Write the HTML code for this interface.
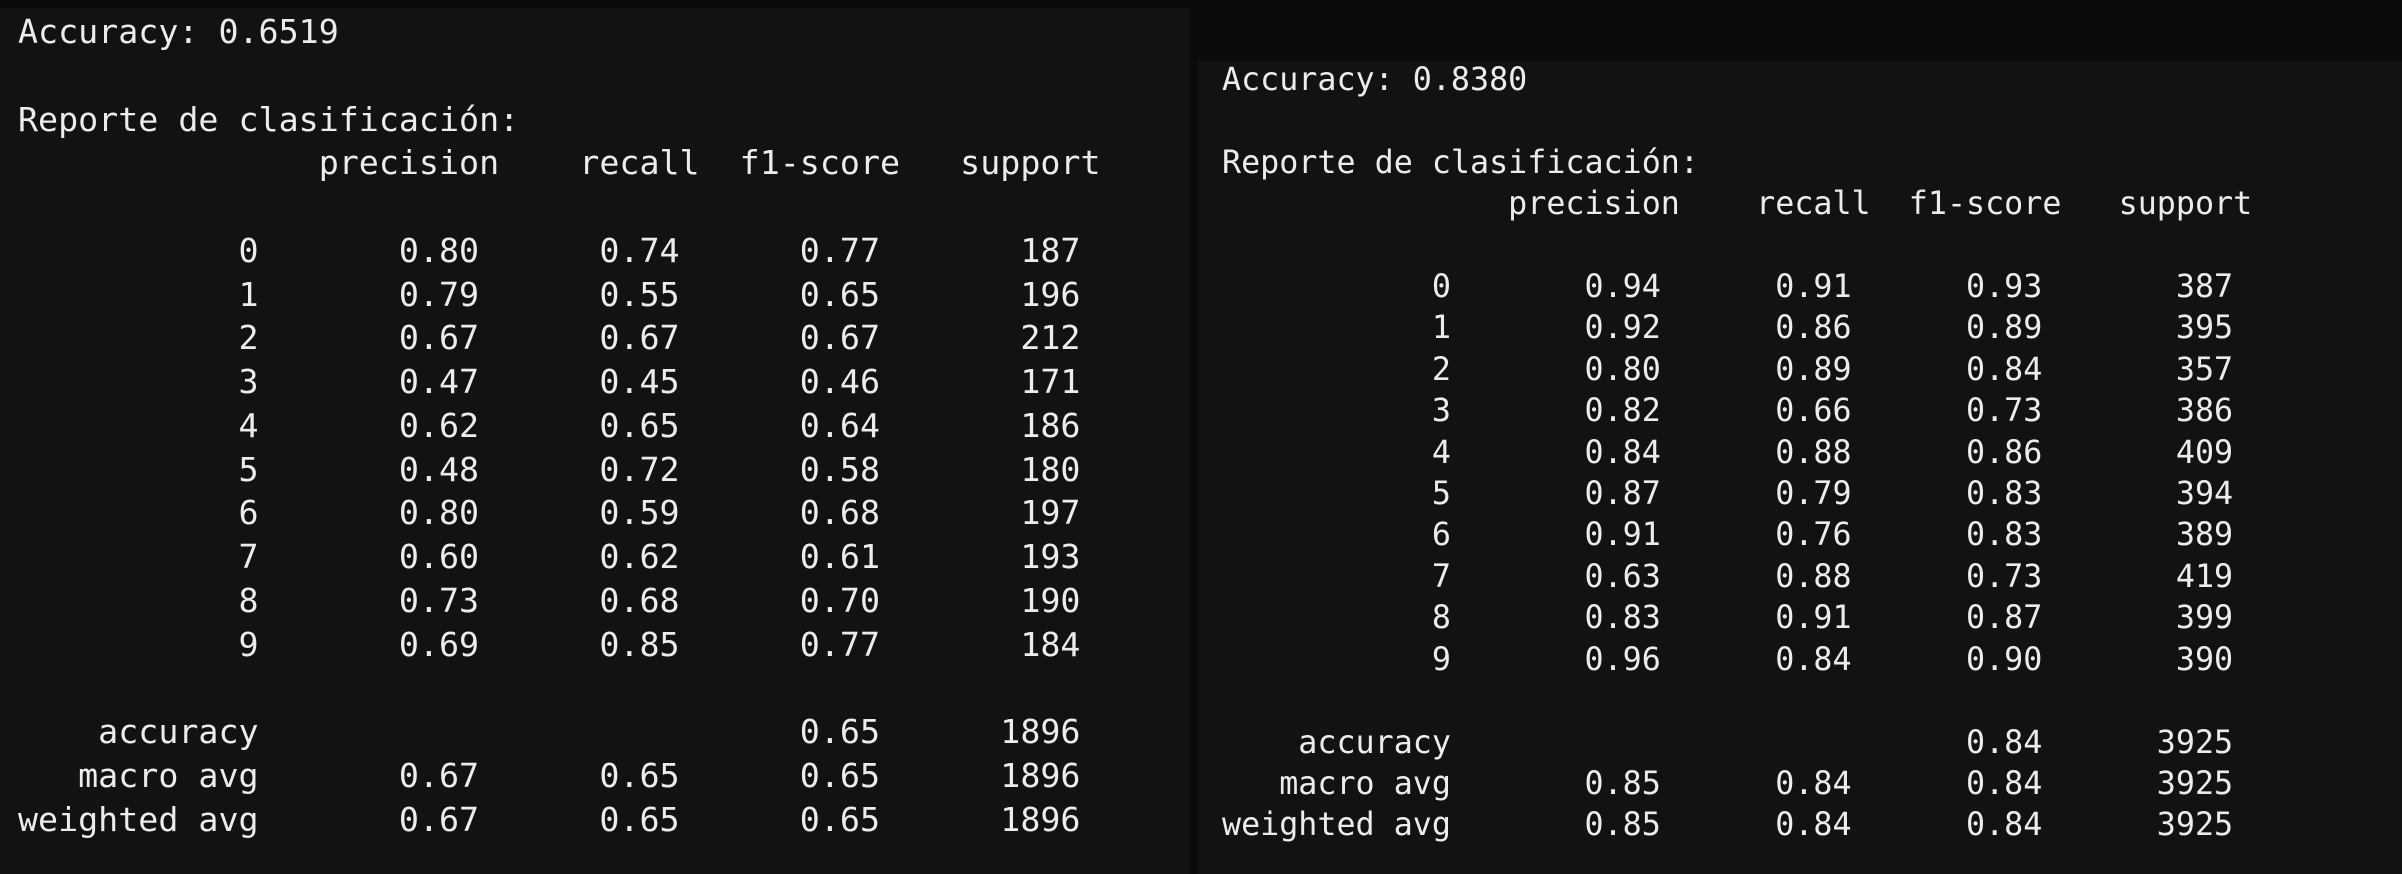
<!DOCTYPE html>
<html><head><meta charset="utf-8"><style>
html,body{margin:0;padding:0;background:#0b0b0b;width:2402px;height:874px;overflow:hidden;}
.p{position:absolute;background:#121212;}
pre{margin:0;color:#ececec;font-family:"DejaVu Sans Mono","Liberation Mono",monospace;position:absolute;white-space:pre;}
#l{left:0;top:8px;width:1190px;height:866px;}
#r{left:1198px;top:61px;width:1204px;height:813px;}
#lt{left:18px;top:2px;font-size:33.3px;line-height:43.75px;}
#rt{left:24px;top:-1px;font-size:31.7px;line-height:41.4px;}
</style></head><body>
<div class="p" id="l"><pre id="lt">Accuracy: 0.6519

Reporte de clasificación:
               precision    recall  f1-score   support

           0       0.80      0.74      0.77       187
           1       0.79      0.55      0.65       196
           2       0.67      0.67      0.67       212
           3       0.47      0.45      0.46       171
           4       0.62      0.65      0.64       186
           5       0.48      0.72      0.58       180
           6       0.80      0.59      0.68       197
           7       0.60      0.62      0.61       193
           8       0.73      0.68      0.70       190
           9       0.69      0.85      0.77       184

    accuracy                           0.65      1896
   macro avg       0.67      0.65      0.65      1896
weighted avg       0.67      0.65      0.65      1896</pre></div>
<div class="p" id="r"><pre id="rt">Accuracy: 0.8380

Reporte de clasificación:
               precision    recall  f1-score   support

           0       0.94      0.91      0.93       387
           1       0.92      0.86      0.89       395
           2       0.80      0.89      0.84       357
           3       0.82      0.66      0.73       386
           4       0.84      0.88      0.86       409
           5       0.87      0.79      0.83       394
           6       0.91      0.76      0.83       389
           7       0.63      0.88      0.73       419
           8       0.83      0.91      0.87       399
           9       0.96      0.84      0.90       390

    accuracy                           0.84      3925
   macro avg       0.85      0.84      0.84      3925
weighted avg       0.85      0.84      0.84      3925</pre></div>
</body></html>
